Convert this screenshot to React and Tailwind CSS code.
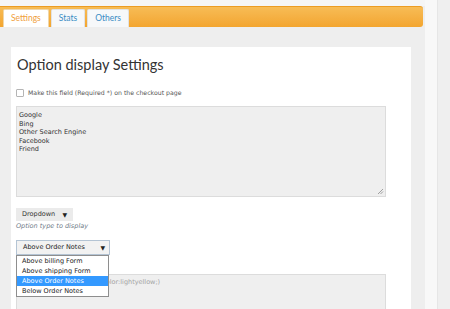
// Option display settings screen
import React from 'react';

const small = { fontFamily: '"DejaVu Sans", Verdana, sans-serif' };

function Tab({ label, active }) {
  return (
    <div
      className={
        'h-[18px] px-[7px] flex items-center text-[8.5px] border border-b-0 rounded-t-[2px] ' +
        (active
          ? 'bg-white border-[#f0d6a8] text-[#f0a03c]'
          : 'bg-[#f6f8fa] border-[#e2e2e2] text-[#3a8cc4]')
      }
      style={{ fontFamily: 'Lato, "Open Sans", sans-serif' }}
    >
      {label}
    </div>
  );
}

function Arrow() {
  return <span className="text-[6px] leading-none text-[#222]">▼</span>;
}

export default function App() {
  const options = ['Google', 'Bing', 'Other Search Engine', 'Facebook', 'Friend'];
  const places = ['Above billing Form', 'Above shipping Form', 'Above Order Notes', 'Below Order Notes'];

  return (
    <div className="w-[450px] h-[309px] overflow-hidden flex bg-[#eeeeee]">
      <div className="w-[425px] shrink-0 flex flex-col">
        <div className="h-[6px] shrink-0 bg-[#f5f5f5]" />
        <div className="h-[21px] shrink-0 mr-[2px] rounded-r-[3px] bg-gradient-to-b from-[#f7bc55] to-[#f3a52e] border-t border-[#ec9c22] flex items-end pl-[3px] gap-[2px]">
          <Tab label="Settings" active />
          <Tab label="Stats" />
          <Tab label="Others" />
        </div>
        <div className="pl-[11px] pr-[14px] pt-[20px] shrink-0">
          <div className="bg-white h-[300px] pl-[5px] pt-[8px]">
            <h1
              className="pl-[1px] text-[14.5px] leading-[20px] text-[#333]"
              style={{ fontFamily: 'Lato, "Open Sans", sans-serif' }}
            >
              Option display Settings
            </h1>

            <div className="mt-[14px] flex items-center gap-[4px] h-[8px]" style={small}>
              <div className="w-[8px] h-[8px] border border-[#b5b5b5] rounded-[1px] bg-white" />
              <span className="text-[6.2px] text-[#555]">Make this field (Required *) on the checkout page</span>
            </div>

            <div className="relative mt-[9px] w-[370px] h-[91px] bg-[#efefef] border border-[#dcdcdc] pl-[2px] pt-[4px]" style={small}>
              {options.map((o) => (
                <div key={o} className="text-[6.5px] leading-[8.5px] text-[#333]">{o}</div>
              ))}
              <svg className="absolute right-[1px] bottom-[1px]" width="7" height="7" viewBox="0 0 7 7">
                <path d="M1 6 L6 1 M3.5 6 L6 3.5" stroke="#8a8a8a" strokeWidth="0.8" />
              </svg>
            </div>

            <div className="mt-[11px] w-[57px] h-[13px] bg-[#ebebeb] flex items-center justify-between pl-[6px] pr-[6px]" style={small}>
              <span className="text-[6.5px] text-[#333]">Dropdown</span>
              <Arrow />
            </div>
            <div className="text-[6.5px] leading-[10px] italic text-[#6e7a86]" style={small}>
              Option type to display
            </div>

            <div className="relative mt-[9px]" style={small}>
              <div className="w-[94px] h-[15px] bg-[#f2f2f2] border border-[#b4c4d4] flex items-center justify-between pl-[6px] pr-[4px]">
                <span className="text-[6.5px] text-[#222]">Above Order Notes</span>
                <Arrow />
              </div>
              <div className="absolute left-0 top-[15px] z-10 w-[93px] bg-white border border-[#8e8e8e]">
                {places.map((p, i) => (
                  <div
                    key={p}
                    className={
                      'h-[10px] pl-[5px] text-[6.5px] leading-[10px] ' +
                      (i === 2 ? 'bg-[#3399ff] text-white' : 'text-[#222]')
                    }
                  >
                    {p}
                  </div>
                ))}
              </div>
              <div className="mt-[19px] w-[370px] h-[60px] bg-[#efefef] border border-[#dcdcdc] pl-[30px] pt-[3px]">
                <div className="text-[6.5px] leading-[9px] text-[#a3a3a3]">(ex. background-color:lightyellow;)</div>
              </div>
            </div>
          </div>
        </div>
      </div>
      <div className="w-[13px] shrink-0 bg-[#f8f8f8] border-r border-[#e6e6e6]" />
      <div className="flex-1 bg-[#efefef]" />
    </div>
  );
}
